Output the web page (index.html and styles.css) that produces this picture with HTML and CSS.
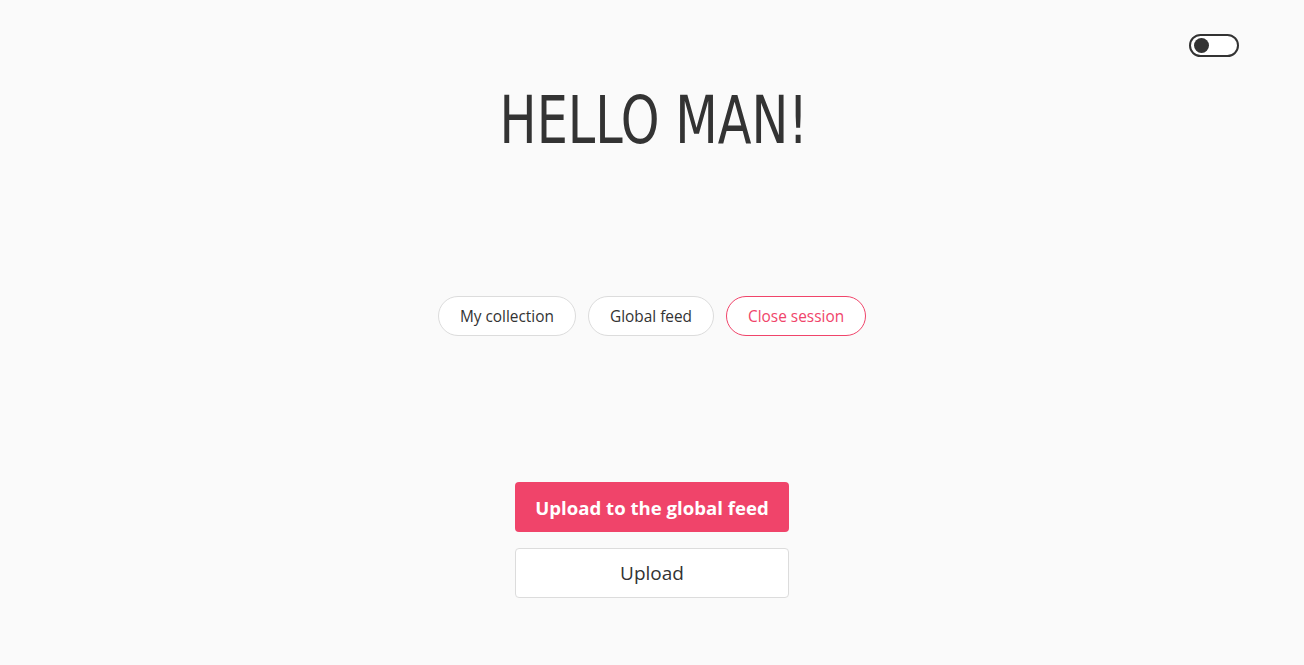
FILE: index.html
```html
<!DOCTYPE html>
<html>
<head>
<meta charset="utf-8">
<link rel="stylesheet" href="styles.css">
</head>
<body>
<div class="page">
  <header class="topbar">
    <button class="toggle" aria-label="theme"><span class="knob"></span></button>
  </header>
  <h1 class="title">HELLO MAN!</h1>
  <nav class="pills">
    <button class="pill">My collection</button>
    <button class="pill">Global feed</button>
    <button class="pill pill-danger">Close session</button>
  </nav>
  <div class="actions">
    <button class="btn btn-primary">Upload to the global feed</button>
    <button class="btn btn-plain">Upload</button>
  </div>
</div>
</body>
</html>
```

FILE: styles.css
```css
html, body {
  margin: 0;
  background: #fafafa;
}
body {
  font-family: "Open Sans", "Noto Sans", sans-serif;
  color: #333;
}
.page {
  display: flex;
  flex-direction: column;
  align-items: center;
  height: 665px;
}
.topbar {
  align-self: stretch;
  display: flex;
  justify-content: flex-end;
  padding: 34px 65px 0 0;
  height: 22px;
}
.toggle {
  box-sizing: border-box;
  width: 50px;
  height: 23px;
  border: 2px solid #333;
  border-radius: 12px;
  background: #fff;
  padding: 0 0 0 3px;
  display: flex;
  align-items: center;
}
.knob {
  width: 15px;
  height: 15px;
  border-radius: 50%;
  background: #333;
}
.title {
  margin: 25px 0 0;
  font-family: "DejaVu Sans Condensed", "DejaVu Sans", sans-serif;
  font-weight: 400;
  font-size: 66px;
  line-height: 80px;
  color: #333;
  transform: translateX(2px) scaleX(0.83);
}
.pills {
  margin-top: 135px;
  display: flex;
  gap: 12px;
}
.pill {
  box-sizing: border-box;
  height: 40px;
  padding: 0 21px;
  border: 1px solid #dcdcdc;
  border-radius: 20px;
  background: #fff;
  font-family: "Open Sans", "Noto Sans", sans-serif;
  font-size: 15.4px;
  color: #333;
}
.pill-danger {
  border-color: #f0446a;
  color: #f0446a;
}
.actions {
  margin-top: 146px;
  display: flex;
  flex-direction: column;
  gap: 16px;
}
.btn {
  box-sizing: border-box;
  width: 274px;
  height: 50px;
  border-radius: 4px;
  font-family: "Open Sans", "Noto Sans", sans-serif;
  font-size: 19px;
}
.btn-primary {
  background: #f0446a;
  border: none;
  color: #fff;
  font-weight: 700;
  font-size: 18.6px;
}
.btn-plain {
  background: #fff;
  border: 1px solid #dcdcdc;
  color: #333;
}
```
